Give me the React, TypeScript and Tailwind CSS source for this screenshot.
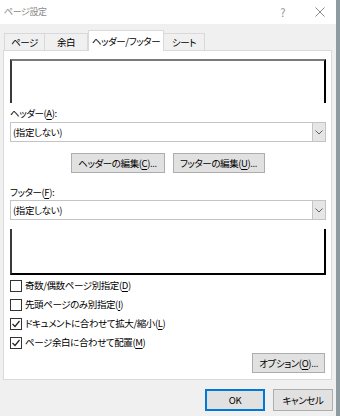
import React from 'react';

const font =
  "font-['Noto_Sans_CJK_JP','Liberation_Sans',sans-serif] [font-feature-settings:'palt'] whitespace-nowrap tracking-[-0.4px]";

function Key({ k }: { k: string }) {
  return <span className="underline underline-offset-2">{k}</span>;
}

function Select() {
  return (
    <div className="flex h-[20px] w-[316px] items-stretch border border-[#c4c4c4] bg-white">
      <div className="flex flex-1 items-center pl-[2px] text-[9.5px] text-black">
        <span>(指定しない)</span>
      </div>
      <div className="flex w-[13px] items-center justify-center border-l border-[#c4c4c4] bg-[#e6e6e6]">
        <svg width="8" height="5" viewBox="0 0 8 5">
          <path d="M0.5 0.5 L4 4 L7.5 0.5" fill="none" stroke="#606060" strokeWidth="1" />
        </svg>
      </div>
    </div>
  );
}

function Button({ children, className = '' }: { children: React.ReactNode; className?: string }) {
  return (
    <div className={`flex h-[20px] items-center justify-center border border-[#adadad] bg-[#e1e1e1] text-[9.5px] text-black ${className}`}>
      <span>{children}</span>
    </div>
  );
}

function Check({ checked, children }: { checked?: boolean; children: React.ReactNode }) {
  return (
    <div className="flex h-[19px] items-center">
      <div className="flex h-[12px] w-[12px] items-center justify-center border border-[#333333] bg-white">
        {checked && (
          <svg width="10" height="10" viewBox="0 0 10 10">
            <path d="M1.5 5 L4 7.5 L8.5 2" fill="none" stroke="#222222" strokeWidth="1.2" />
          </svg>
        )}
      </div>
      <span className="ml-[3px] text-[9.5px] text-black">{children}</span>
    </div>
  );
}

export default function App() {
  const tabs = [
    { label: 'ページ', w: 'w-[41px]' },
    { label: '余白', w: 'w-[43px]' },
    { label: 'ヘッダー/フッター', w: 'w-[76px]', active: true },
    { label: 'シート', w: 'w-[41px]' },
  ];

  return (
    <div className={`flex h-[416px] w-[340px] overflow-hidden ${font}`}>
      <div className="flex w-[336px] flex-col bg-[#f0f0f0]">
        {/* Title bar */}
        <div className="flex h-[24px] items-center bg-white pl-[4px] text-[9px] text-[#8a8a8a]">
          <span className="flex-1">ページ設定</span>
          <span className="mr-[30px] text-[11px] text-[#909090]">?</span>
          <svg width="10" height="10" viewBox="0 0 10 10" className="mr-[11px]">
            <path d="M0.5 0.5 L9.5 9.5 M9.5 0.5 L0.5 9.5" stroke="#8a8a8a" strokeWidth="1" />
          </svg>
        </div>

        {/* Tabs */}
        <div className="ml-[4px] mt-[6px] flex h-[20px] items-end">
          {tabs.map((t) =>
            t.active ? (
              <div
                key={t.label}
                className={`relative z-10 -mb-[1px] flex h-[21px] ${t.w} items-center justify-center border border-b-0 border-[#d9d9d9] bg-white text-[9.5px] text-black`}
              >
                <span>{t.label}</span>
              </div>
            ) : (
              <div
                key={t.label}
                className={`flex h-[17px] ${t.w} items-center justify-center border border-b-0 border-l-0 border-[#d9d9d9] text-[9.5px] text-black first:border-l`}
              >
                <span>{t.label}</span>
              </div>
            )
          )}
        </div>

        {/* Panel */}
        <div className="ml-[3px] flex h-[330px] w-[329px] flex-col border border-[#d9d9d9] bg-white pl-[6px]">
          <div className="mt-[8px] h-[44px] w-[316px] border-l-2 border-r-2 border-t-2 border-l-[#3a3a3a] border-r-black border-t-[#7a7a7a]" />
          <div className="mt-[3px] flex h-[14px] items-center text-[9.5px] text-black">
            <span>
              ヘッダー(<Key k="A" />):
            </span>
          </div>
          <div className="mt-[2px]">
            <Select />
          </div>
          <div className="mt-[11px] flex justify-center gap-[8px] pr-[6px]">
            <Button className="w-[94px]">
              ヘッダーの編集(<Key k="C" />)...
            </Button>
            <Button className="w-[92px]">
              フッターの編集(<Key k="U" />)...
            </Button>
          </div>
          <div className="mt-[12px] flex h-[14px] items-center text-[9.5px] text-black">
            <span>
              フッター(<Key k="F" />):
            </span>
          </div>
          <div className="mt-[1px]">
            <Select />
          </div>
          <div className="mt-[9px] h-[46px] w-[316px] border-b-2 border-l-2 border-r-2 border-b-black border-l-[#3a3a3a] border-r-black" />
          <div className="mt-[1px] flex flex-col">
            <Check>
              奇数/偶数ページ別指定(<Key k="D" />)
            </Check>
            <Check>
              先頭ページのみ別指定(<Key k="I" />)
            </Check>
            <Check checked>
              ドキュメントに合わせて拡大/縮小(<Key k="L" />)
            </Check>
            <Check checked>
              ページ余白に合わせて配置(<Key k="M" />)
            </Check>
          </div>
          <div className="mt-[1px] flex justify-end pr-[6px]">
            <Button className="w-[73px]">
              オプション(<Key k="O" />)...
            </Button>
          </div>
        </div>

        {/* Footer buttons */}
        <div className="mt-[9px] flex justify-end gap-[8px] pr-[3px]">
          <div className="flex h-[22px] w-[60px] items-center justify-center border-2 border-[#0078d7] bg-[#e1e1e1] text-[9.5px] text-black">
            <span>OK</span>
          </div>
          <div className="flex h-[22px] w-[60px] items-center justify-center border border-[#adadad] bg-[#e1e1e1] text-[9.5px] text-black">
            <span>キャンセル</span>
          </div>
        </div>
      </div>
      <div className="w-[4px] bg-[#8e9ca1]" />
    </div>
  );
}
